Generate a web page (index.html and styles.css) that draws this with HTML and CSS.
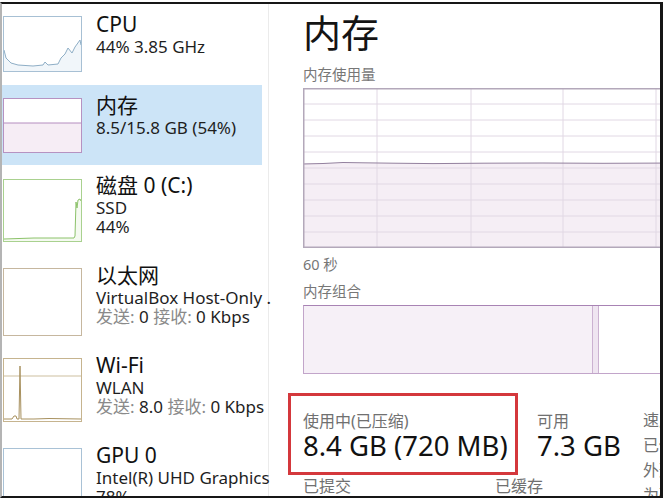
FILE: index.html
```html
<!DOCTYPE html>
<html lang="zh-CN">
<head>
<meta charset="utf-8">
<title>任务管理器 - 内存</title>
<link rel="stylesheet" href="styles.css">
</head>
<body>
<div class="frame">
  <aside class="sidebar">
    <div class="item item-cpu">
      <div class="thumb thumb-cpu">
        <svg viewBox="0 0 77 54" preserveAspectRatio="none">
          <polygon class="cpu-fill" points="0,33 2,41 7,46 14,48 29,49 39,48 41,45 44,48 54,47 57,41 61,37 64,31 68,36 71,30 76,23 77,28 77,54 0,54"/>
          <polyline class="cpu-line" points="0,33 2,41 7,46 14,48 29,49 39,48 41,45 44,48 54,47 57,41 61,37 64,31 68,36 71,30 76,23 77,28"/>
        </svg>
      </div>
      <div class="info">
        <div class="name">CPU</div>
        <div class="sub">44% 3.85 GHz</div>
      </div>
    </div>
    <div class="item item-mem selected">
      <div class="thumb thumb-mem">
        <svg viewBox="0 0 77 53" preserveAspectRatio="none">
          <rect class="mem-fill" x="0" y="24" width="77" height="29"/>
          <line class="mem-line" x1="0" y1="24" x2="77" y2="24"/>
        </svg>
      </div>
      <div class="info">
        <div class="name">内存</div>
        <div class="sub">8.5/15.8 GB (54%)</div>
      </div>
    </div>
    <div class="item item-disk">
      <div class="thumb thumb-disk">
        <svg viewBox="0 0 77 61" preserveAspectRatio="none">
          <polygon class="disk-fill" points="0,59 30,58 60,58 70,58 71,56 72,22 73,28 74,20 76,19 77,21 77,61 0,61"/>
          <polyline class="disk-line" points="0,59 30,58 60,58 70,58 71,56 72,22 73,28 74,20 76,19 77,21"/>
        </svg>
      </div>
      <div class="info">
        <div class="name">磁盘 0 (C:)</div>
        <div class="sub">SSD</div>
        <div class="sub">44%</div>
      </div>
    </div>
    <div class="item item-eth">
      <div class="thumb thumb-eth"></div>
      <div class="info">
        <div class="name">以太网</div>
        <div class="sub">VirtualBox Host-Only .</div>
        <div class="sub"><span class="dim">发送:</span> 0 <span class="dim">接收:</span> 0 Kbps</div>
      </div>
    </div>
    <div class="item item-wifi">
      <div class="thumb thumb-wifi">
        <svg viewBox="0 0 77 62" preserveAspectRatio="none">
          <line class="wifi-grid" x1="0" y1="17" x2="77" y2="17"/>
          <polyline class="wifi-line" points="0,60 8,60 10,57 12,57 13,60 15,60 16,7 17,60 30,60 45,59.5 77,60"/>
        </svg>
      </div>
      <div class="info">
        <div class="name">Wi-Fi</div>
        <div class="sub">WLAN</div>
        <div class="sub"><span class="dim">发送:</span> 8.0 <span class="dim">接收:</span> 0 Kbps</div>
      </div>
    </div>
    <div class="item item-gpu">
      <div class="thumb thumb-gpu"></div>
      <div class="info">
        <div class="name">GPU 0</div>
        <div class="sub">Intel(R) UHD Graphics</div>
        <div class="sub">78%</div>
      </div>
    </div>
  </aside>

  <main class="main">
    <h1 class="title">内存</h1>
    <div class="label">内存使用量</div>
    <div class="usage">
      <svg viewBox="0 0 380 160" width="380" height="160">
        <rect class="usage-fill" x="0" y="75" width="380" height="85"/>
        <g class="grid">
          <line x1="74" y1="0" x2="74" y2="160"/>
          <line x1="168" y1="0" x2="168" y2="160"/>
          <line x1="260" y1="0" x2="260" y2="160"/>
          <line x1="353" y1="0" x2="353" y2="160"/>
          <line x1="0" y1="16" x2="380" y2="16"/>
          <line x1="0" y1="32" x2="380" y2="32"/>
          <line x1="0" y1="48" x2="380" y2="48"/>
          <line x1="0" y1="64" x2="380" y2="64"/>
          <line x1="0" y1="80" x2="380" y2="80"/>
          <line x1="0" y1="96" x2="380" y2="96"/>
          <line x1="0" y1="112" x2="380" y2="112"/>
          <line x1="0" y1="128" x2="380" y2="128"/>
          <line x1="0" y1="144" x2="380" y2="144"/>
        </g>
        <polyline class="usage-line" points="0,76 20,75.5 40,74.5 60,74.8 90,75.2 130,75.6 180,75.2 240,75 300,75.3 380,75"/>
        <rect class="usage-border" x="0.75" y="0.75" width="400" height="158.5"/>
      </svg>
    </div>
    <div class="label time">60 秒</div>
    <div class="label comp-label">内存组合</div>
    <div class="comp">
      <div class="comp-used"></div>
      <div class="comp-mod"></div>
      <div class="comp-free"></div>
    </div>
    <div class="stats">
      <div class="stats-left">
        <div class="stat-row">
          <div class="stat stat-hl">
            <div class="stat-label">使用中(已压缩)</div>
            <div class="stat-value">8.4 GB (720 MB)</div>
          </div>
          <div class="stat stat-avail">
            <div class="stat-label">可用</div>
            <div class="stat-value">7.3 GB</div>
          </div>
        </div>
        <div class="stat-row2">
          <div class="stat-label committed">已提交</div>
          <div class="stat-label">已缓存</div>
        </div>
      </div>
      <div class="stats-right">
        <div class="spec">速度:</div>
        <div class="spec">已使用的插槽:</div>
        <div class="spec">外形规格:</div>
        <div class="spec">为硬件保留的内存:</div>
      </div>
    </div>
  </main>
</div>
</body>
</html>
```

FILE: styles.css
```css
* { box-sizing: border-box; }

html, body {
  margin: 0;
  padding: 0;
  background: #ffffff;
}

body {
  width: 667px;
  height: 500px;
  overflow: hidden;
  font-family: "Noto Sans", "Noto Sans CJK SC", sans-serif;
  color: #1b1b1b;
}

.frame {
  margin-top: 2px;
  width: 663px;
  height: 496px;
  border-top: 2px solid #161616;
  border-right: 3px solid #161616;
  border-bottom: 2px solid #161616;
  border-left: 2px solid #b4b4b4;
  display: flex;
  overflow: hidden;
  background: #ffffff;
}

/* ---------- sidebar ---------- */
.sidebar {
  width: 267px;
  flex: none;
  border-right: 1px solid #ebebeb;
  display: flex;
  flex-direction: column;
}

.item {
  display: flex;
  height: 90px;
  margin-right: 6px;
  padding-left: 1px;
  flex: none;
}
.item-cpu { height: 81px; }
.item-mem { height: 80px; }
.item-gpu { flex: 1; }

.selected { background: #cce4f7; }

.thumb {
  width: 79px;
  flex: none;
  margin-top: 13px;
  border: 1px solid #a9c2d6;
  background: #ffffff;
}
.thumb svg { display: block; width: 100%; height: 100%; }

.thumb-cpu { height: 56px; margin-top: 12px; border-color: #a7c0d4; }
.thumb-mem { height: 55px; border-color: #b692c1; }
.thumb-disk { height: 63px; margin-top: 14px; border-color: #a9d18f; }
.thumb-eth { height: 68px; border-color: #c6b79f; }
.thumb-wifi { height: 64px; border-color: #c6b48f; }
.thumb-gpu { height: 70px; border-color: #a9c2d6; }

.cpu-fill { fill: #f1f6fa; }
.cpu-line { fill: none; stroke: #8eaec6; stroke-width: 1; }
.mem-fill { fill: #f6edf5; }
.mem-line { stroke: #b48dbf; stroke-width: 1; }
.disk-fill { fill: #f5faf1; }
.disk-line { fill: none; stroke: #8cc26a; stroke-width: 1; }
.wifi-grid { stroke: #cdbf9f; stroke-width: 1; }
.wifi-line { fill: none; stroke: #a8915f; stroke-width: 1; }

.info {
  margin-left: 14px;
  padding-top: 7px;
  min-width: 0;
  white-space: nowrap;
}
.name {
  font-size: 21px;
  line-height: 26px;
  color: #111111;
}
.sub {
  font-size: 17px;
  line-height: 19px;
  color: #1e1e1e;
}
.dim { color: #8a8a8a; }

/* ---------- main ---------- */
.main {
  flex: 1;
  min-width: 0;
  overflow: hidden;
  padding-left: 34px;
}

.title {
  margin: 5px 0 0;
  font-size: 38px;
  line-height: 46px;
  font-weight: 400;
  color: #141414;
}

.label {
  font-size: 14.5px;
  line-height: 18px;
  color: #777777;
  margin-top: 10px;
  white-space: nowrap;
}
.time { margin-top: 7px; }
.comp-label { margin-top: 9px; }

.usage {
  margin-top: 5px;
  width: 380px;
  height: 160px;
}
.usage svg { display: block; }
.usage-fill { fill: #f5eef5; }
.grid line { stroke: #e1d8e4; stroke-width: 1; }
.usage-line { fill: none; stroke: #93819e; stroke-width: 1; }
.usage-border { fill: none; stroke: #b3a8ba; stroke-width: 1.5; }

.comp {
  margin-top: 5px;
  width: 380px;
  height: 69px;
  display: flex;
  border: 1.5px solid #c2a5ca;
  border-top-color: #a883b4;
}
.comp-used { width: 288px; flex: none; background: #f6f0f7; }
.comp-mod {
  width: 7px;
  flex: none;
  background: #efe5f1;
  border-left: 1.5px solid #cbb2d1;
  border-right: 1.5px solid #cbb2d1;
}
.comp-free { flex: 1; background: #ffffff; }

.stats {
  display: flex;
  margin-top: 19px;
  margin-left: -15px;
}
.stats-left { width: 355px; flex: none; }
.stat-row { display: flex; }
.stat { white-space: nowrap; }
.stat-hl {
  width: 230px;
  height: 82px;
  border: 3px solid #d4383c;
  padding: 15px 0 0 12px;
}
.stat-avail {
  margin-left: 19px;
  padding-top: 18px;
}
.stat-label {
  font-size: 16px;
  line-height: 20px;
  color: #707070;
  white-space: nowrap;
}
.stat-value {
  font-size: 27.5px;
  line-height: 30px;
  color: #111111;
}
.stat-row2 {
  display: flex;
  padding-left: 15px;
  margin-top: 1px;
}
.committed { width: 192px; }

.stats-right {
  padding-top: 15px;
  white-space: nowrap;
}
.spec {
  font-size: 16px;
  line-height: 25px;
  color: #707070;
}
```
